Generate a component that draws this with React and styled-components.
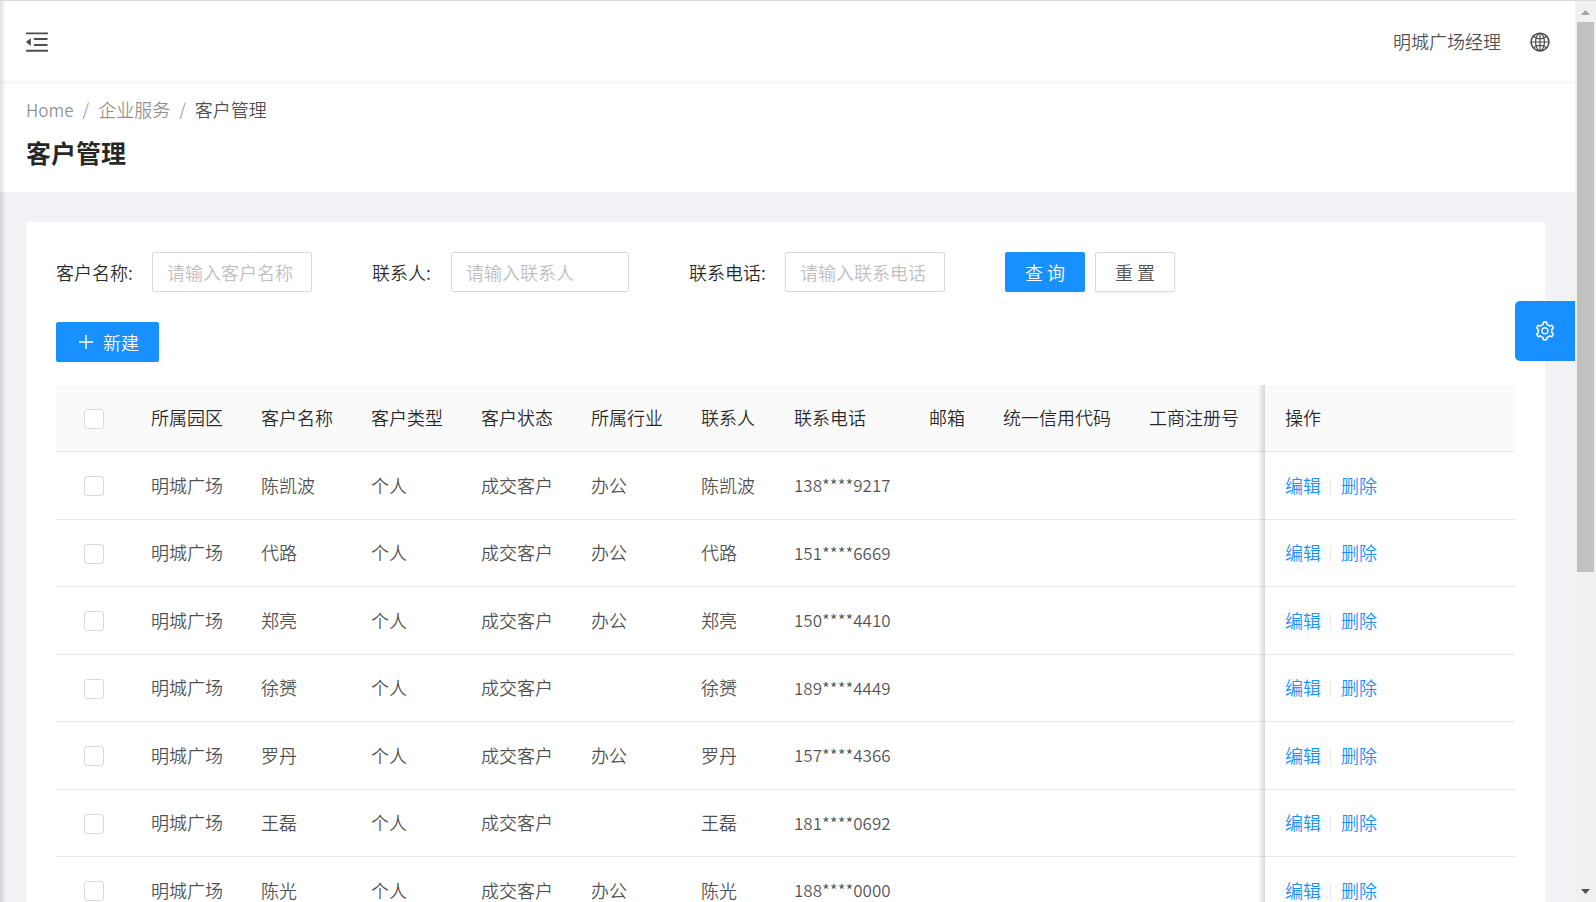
import React, { useState } from 'react';
import styled, { createGlobalStyle } from 'styled-components';
import {
  AiOutlineGlobal,
  AiOutlineMenuFold,
  AiOutlinePlus,
  AiOutlineSetting,
} from 'react-icons/ai';

const GlobalStyle = createGlobalStyle`
  * {
    box-sizing: border-box;
  }
  body {
    margin: 0;
    color: rgba(0, 0, 0, 0.7);
    font-family: "Noto Sans CJK SC", sans-serif;
    font-size: 18px;
    font-weight: 350;
    line-height: 26px;
  }
  button, input {
    font: inherit;
  }
`;

const Shell = styled.div`
  position: relative;
  display: flex;
  height: 100vh;
  overflow: hidden;
  border-top: 1px solid #dadbdc;
  background: #f0f2f5;
`;

// shadow cast by the side menu
const SiderShadow = styled.div`
  position: absolute;
  z-index: 5;
  top: 0;
  bottom: 0;
  left: 0;
  width: 6px;
  background: linear-gradient(90deg, rgba(0, 21, 41, 0.13), rgba(0, 21, 41, 0));
  pointer-events: none;
`;

const Main = styled.main`
  flex: 1;
  min-width: 0;
  height: 100%;
  overflow: hidden;
`;

const TopBar = styled.header`
  position: relative;
  display: flex;
  align-items: center;
  justify-content: space-between;
  height: 80px;
  padding: 1px 24px 0 23px;
  background: #fff;
  box-shadow: 0 1px 5px rgba(0, 21, 41, 0.08);
`;

const IconButton = styled.button`
  display: flex;
  padding: 0;
  border: 0;
  background: none;
  color: inherit;
  font-size: ${props => props.$size}px;
  cursor: pointer;
`;

const UserArea = styled.div`
  display: flex;
  align-items: center;
  gap: 28px;
`;

const UserName = styled.span`
  padding-bottom: 2px;
`;

const PageHeader = styled.div`
  padding: 15px 30px 20px 26px;
  background: #fff;
`;

const Breadcrumb = styled.nav`
  display: flex;
  gap: 9px;
  height: 26px;
  color: rgba(0, 0, 0, 0.45);

  a {
    color: inherit;
    text-decoration: none;
  }
  b {
    color: rgba(0, 0, 0, 0.7);
    font-weight: inherit;
  }
`;

// latin words and digits sit one step below the chinese text
const Latin = styled.span`
  font-size: 17px;
`;

const Title = styled.h1`
  margin: 11px 0 0;
  color: rgba(0, 0, 0, 0.85);
  font-size: 25px;
  font-weight: 700;
  line-height: 39px;
`;

const Card = styled.section`
  margin: 30px 30px 0 26px;
  padding: 30px;
  border-radius: 2px;
  background: #fff;
`;

const Filters = styled.form`
  display: flex;
  align-items: center;
  gap: 60px;
  margin-bottom: 30px;
`;

const Field = styled.label`
  display: flex;
  align-items: center;
  justify-content: space-between;
  width: ${props => props.$width}px;
  color: rgba(0, 0, 0, 0.85);
`;

const TextInput = styled.input`
  width: ${props => props.$width}px;
  height: 40px;
  padding: 5px 14px;
  border: 1px solid #d9d9d9;
  border-radius: 2px;
  background: #fff;
  outline: none;

  &::placeholder {
    color: #bfbfbf;
    opacity: 1;
  }
`;

const Buttons = styled.div`
  display: flex;
  gap: 10px;
`;

const Button = styled.button`
  display: flex;
  align-items: center;
  justify-content: center;
  gap: 7px;
  height: 40px;
  min-width: 80px;
  padding: 0 19px 1px;
  border: 1px solid ${props => (props.$primary ? '#1890ff' : '#d9d9d9')};
  border-radius: 2px;
  background: ${props => (props.$primary ? '#1890ff' : '#fff')};
  box-shadow: 0 2px 0 rgba(0, 0, 0, 0.03);
  color: ${props => (props.$primary ? '#fff' : 'rgba(0, 0, 0, 0.7)')};
  white-space: pre;
  cursor: pointer;
`;

const Table = styled.table`
  width: 100%;
  margin-top: 23px;
  border-collapse: separate;
  border-spacing: 0;
  table-layout: fixed;
`;

const Row = styled.tr`
  height: 67px;

  tbody &:nth-child(odd) {
    height: 68px;
  }
`;

const Cell = styled.td`
  padding: 0 20px 2px;
  border-bottom: 1px solid #e8e8e8;
  background: #fff;
  text-align: left;
  font-weight: inherit;
  white-space: nowrap;

  thead & {
    background: #fafafa;
    color: rgba(0, 0, 0, 0.85);
  }
`;

const CheckCell = styled(Cell)`
  padding: 1px 0 0;
`;

const FixedCell = styled(Cell)`
  position: sticky;
  right: 0;

  &::before {
    content: "";
    position: absolute;
    top: 0;
    bottom: -1px;
    left: -7px;
    width: 7px;
    background: linear-gradient(270deg, rgba(0, 0, 0, 0.15), rgba(0, 0, 0, 0));
  }
`;

const CheckBox = styled.input.attrs({ type: 'checkbox' })`
  display: block;
  width: 20px;
  height: 20px;
  margin: 0 auto;
  border: 1px solid #d9d9d9;
  border-radius: 3px;
  background: #fff;
  appearance: none;

  &:checked {
    border-color: #1890ff;
    background: #1890ff;
  }
`;

const Actions = styled.div`
  display: flex;
  align-items: center;

  a {
    color: #1890ff;
    text-decoration: none;
  }
  a + a {
    margin-left: 9px;
    padding-left: 11px;
    background: linear-gradient(#e8e8e8, #e8e8e8) left 7px / 1px 16px no-repeat;
  }
`;

const SettingButton = styled.button`
  position: absolute;
  z-index: 4;
  top: 300px;
  right: 21px;
  display: flex;
  align-items: center;
  justify-content: center;
  width: 60px;
  height: 60px;
  border: 0;
  border-radius: 5px 0 0 5px;
  background: #1890ff;
  color: #fff;
  font-size: 22px;
  cursor: pointer;
`;

const ScrollBar = styled.div`
  display: flex;
  flex-direction: column;
  width: 21px;
  padding: 0 2px;
  background: #f1f1f1;
`;

const Arrow = styled.svg`
  width: 17px;
  height: 21px;
  flex: none;
`;

const Track = styled.div`
  flex: 1;
`;

const Thumb = styled.div`
  height: 64%;
  background: #c1c1c1;
`;

const columns = [
  { title: '所属园区', key: 'park', width: 110 },
  { title: '客户名称', key: 'name', width: 110 },
  { title: '客户类型', key: 'type', width: 110 },
  { title: '客户状态', key: 'status', width: 110 },
  { title: '所属行业', key: 'industry', width: 110 },
  { title: '联系人', key: 'name', width: 93 },
  { title: '联系电话', key: 'phone', width: 135 },
  { title: '邮箱', key: 'email', width: 74 },
  { title: '统一信用代码', key: 'creditCode', width: 146 },
  { title: '工商注册号', key: 'regNo' },
];

const customer = (name, industry, phone) => ({
  park: '明城广场',
  type: '个人',
  status: '成交客户',
  name,
  industry,
  phone,
});

const customers = [
  customer('陈凯波', '办公', '138****9217'),
  customer('代路', '办公', '151****6669'),
  customer('郑亮', '办公', '150****4410'),
  customer('徐赟', '', '189****4449'),
  customer('罗丹', '办公', '157****4366'),
  customer('王磊', '', '181****0692'),
  customer('陈光', '办公', '188****0000'),
];

const CustomerTable = () => {
  const [selected, setSelected] = useState([]);

  const toggle = phone =>
    setSelected(
      selected.includes(phone)
        ? selected.filter(p => p !== phone)
        : [...selected, phone]
    );

  const toggleAll = e =>
    setSelected(e.target.checked ? customers.map(c => c.phone) : []);

  return (
    <Table>
      <colgroup>
        <col width={75} />
        {columns.map(col => (
          <col key={col.title} width={col.width} />
        ))}
        <col width={250} />
      </colgroup>
      <thead>
        <Row>
          <CheckCell as="th">
            <CheckBox
              aria-label="全选"
              checked={selected.length === customers.length}
              onChange={toggleAll}
            />
          </CheckCell>
          {columns.map(col => (
            <Cell as="th" key={col.title}>{col.title}</Cell>
          ))}
          <FixedCell as="th">操作</FixedCell>
        </Row>
      </thead>
      <tbody>
        {customers.map(item => (
          <Row key={item.phone}>
            <CheckCell>
              <CheckBox
                aria-label={item.name}
                checked={selected.includes(item.phone)}
                onChange={() => toggle(item.phone)}
              />
            </CheckCell>
            {columns.map(col => (
              <Cell key={col.title}>
                {col.key === 'phone' ? <Latin>{item.phone}</Latin> : item[col.key]}
              </Cell>
            ))}
            <FixedCell>
              <Actions>
                <a href="#edit">编辑</a>
                <a href="#delete">删除</a>
              </Actions>
            </FixedCell>
          </Row>
        ))}
      </tbody>
    </Table>
  );
};

const App = () => (
  <Shell>
    <GlobalStyle />
    <SiderShadow />
    <Main>
      <TopBar>
        <IconButton $size={28} aria-label="收起菜单">
          <AiOutlineMenuFold />
        </IconButton>
        <UserArea>
          <UserName>明城广场经理</UserName>
          <IconButton $size={22} aria-label="语言">
            <AiOutlineGlobal />
          </IconButton>
        </UserArea>
      </TopBar>

      <PageHeader>
        <Breadcrumb>
          <a href="#home"><Latin>Home</Latin></a>
          <Latin>/</Latin>
          <a href="#service">企业服务</a>
          <Latin>/</Latin>
          <b>客户管理</b>
        </Breadcrumb>
        <Title>客户管理</Title>
      </PageHeader>

      <Card>
        <Filters onSubmit={e => e.preventDefault()}>
          <Field $width={256}>
            客户名称:
            <TextInput $width={160} placeholder="请输入客户名称" />
          </Field>
          <Field $width={257}>
            联系人:
            <TextInput $width={178} placeholder="请输入联系人" />
          </Field>
          <Field $width={256}>
            联系电话:
            <TextInput $width={160} placeholder="请输入联系电话" />
          </Field>
          <Buttons>
            <Button $primary type="submit">查 询</Button>
            <Button type="reset">重 置</Button>
          </Buttons>
        </Filters>

        <Button $primary type="button">
          <AiOutlinePlus size={20} />
          新建
        </Button>

        <CustomerTable />
      </Card>
    </Main>

    <SettingButton aria-label="设置">
      <AiOutlineSetting />
    </SettingButton>

    <ScrollBar aria-hidden="true">
      <Arrow viewBox="0 0 17 21">
        <path d="M4 14h9L8.500 9z" fill="#a3a3a3" />
      </Arrow>
      <Track>
        <Thumb />
      </Track>
      <Arrow viewBox="0 0 17 21">
        <path d="M4 8h9l-4.500 5z" fill="#505050" />
      </Arrow>
    </ScrollBar>
  </Shell>
);

export default App;
